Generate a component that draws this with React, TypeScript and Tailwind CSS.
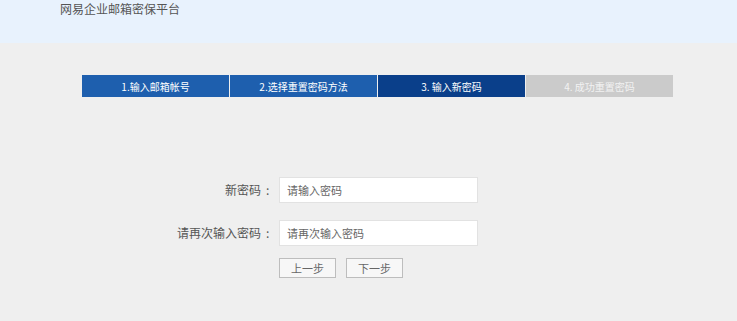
const font = { fontFamily: '"Microsoft YaHei", "Noto Sans CJK SC", sans-serif' };

const steps = [
  { label: "1.输入邮箱帐号", cls: "bg-[#1e5fae] text-white" },
  { label: "2.选择重置密码方法", cls: "bg-[#1e5fae] text-white" },
  { label: "3. 输入新密码", cls: "bg-[#0a3f8a] text-white" },
  { label: "4. 成功重置密码", cls: "bg-[#cbcbcb] text-[#f2f2f2]" },
];

const rows = [
  { label: "新密码", hint: "请输入密码" },
  { label: "请再次输入密码", hint: "请再次输入密码" },
];

export default function App() {
  return (
    <div className="w-[737px] h-[321px] bg-[#efefef] overflow-hidden" style={font}>
      <header className="h-[43px] bg-[#e8f2fd] pl-[60px] pt-[1px]">
        <h1 className="text-[12px] leading-[16px] text-[#555]">网易企业邮箱密保平台</h1>
      </header>

      <div className="mt-[32px] ml-[82px] flex gap-[1px]">
        {steps.map((s) => (
          <div
            key={s.label}
            className={`w-[147px] h-[22px] flex items-center justify-center text-[10px] ${s.cls}`}
          >
            {s.label}
          </div>
        ))}
      </div>

      <div className="mt-[80px] flex flex-col gap-[17px] text-[12px] text-[#555]">
        {rows.map((r) => (
          <div key={r.label} className="flex items-center">
            <label className="w-[274px] flex justify-end items-center">
              {r.label}
              <span className="ml-[5px] w-[8px] text-left">:</span>
            </label>
            <input
              type="password"
              placeholder={r.hint}
              className="ml-[5px] w-[199px] h-[26px] bg-white border border-[#e2e2e2] pl-[7px] text-[11px] placeholder:text-[#666] outline-none"
            />
          </div>
        ))}
      </div>

      <div className="flex ml-[279px] mt-[12px] gap-[10px]">
        <button className="w-[57px] h-[20px] bg-[#f7f7f7] border border-[#bdbdbd] text-[11px] text-[#666]">
          上一步
        </button>
        <button className="w-[57px] h-[20px] bg-[#f7f7f7] border border-[#bdbdbd] text-[11px] text-[#666]">
          下一步
        </button>
      </div>
    </div>
  );
}
